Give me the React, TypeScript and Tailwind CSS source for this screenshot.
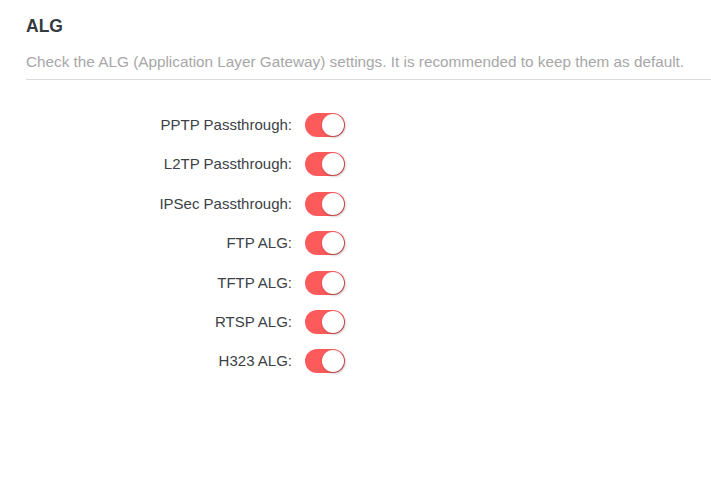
import { useState } from "react";

const ITEMS = [
  "PPTP Passthrough",
  "L2TP Passthrough",
  "IPSec Passthrough",
  "FTP ALG",
  "TFTP ALG",
  "RTSP ALG",
  "H323 ALG",
];

function Toggle({ on, onChange }: { on: boolean; onChange: () => void }) {
  return (
    <button
      type="button"
      onClick={onChange}
      className={`relative flex h-[24px] w-[40px] items-center rounded-full transition-colors ${
        on ? "bg-[#fd5a5c]" : "bg-[#d9d9d9]"
      }`}
    >
      <span
        className={`absolute top-[1px] h-[22px] w-[22px] rounded-full bg-white shadow-[1px_1px_3px_rgba(0,0,0,0.35)] transition-all ${
          on ? "left-[17px]" : "left-[1px]"
        }`}
      />
    </button>
  );
}

export default function App() {
  const [state, setState] = useState<boolean[]>(ITEMS.map(() => true));

  return (
    <div
      className="min-h-[495px] bg-white pl-[26px] pt-[15px]"
      style={{ fontFamily: '"Liberation Sans", Arial, sans-serif' }}
    >
      <h1 className="text-[17.5px] font-bold leading-[22px] text-[#333a40]">ALG</h1>
      <p className="mt-[15px] text-[15.3px] leading-[20px] text-[#a7a7a7]">
        Check the ALG (Application Layer Gateway) settings. It is recommended to keep them as default.
      </p>
      <div className="mt-[7px] h-px bg-[#dcdcdc]" />

      <div className="mt-[33px] flex flex-col gap-[15.4px]">
        {ITEMS.map((label, i) => (
          <div key={label} className="flex items-center">
            <span className="w-[266px] text-right text-[15px] leading-[24px] text-[#3b4146]">
              {label}:
            </span>
            <div className="ml-[13px]">
              <Toggle
                on={state[i]}
                onChange={() =>
                  setState((s) => s.map((v, j) => (j === i ? !v : v)))
                }
              />
            </div>
          </div>
        ))}
      </div>
    </div>
  );
}
